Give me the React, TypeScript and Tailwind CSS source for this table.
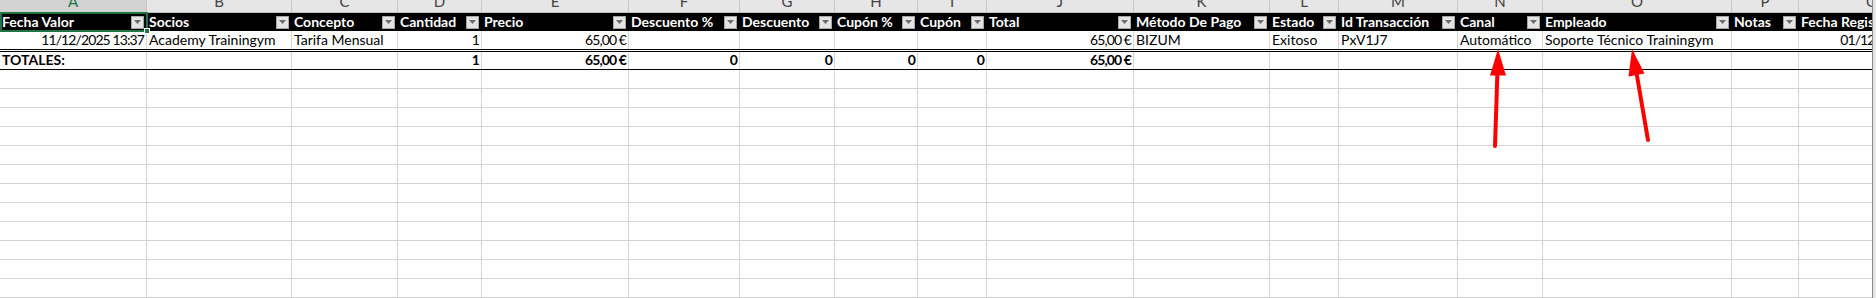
import React from "react";

const GRID =
  "grid grid-cols-[147px_145px_106px_84px_147px_111px_95px_83px_69px_147px_136px_69px_119px_85px_189px_67px_147px] w-[1946px]";

const letters = ["A", "B", "C", "D", "E", "F", "G", "H", "I", "J", "K", "L", "M", "N", "O", "P", "Q"];
const headers = [
  "Fecha Valor",
  "Socios",
  "Concepto",
  "Cantidad",
  "Precio",
  "Descuento %",
  "Descuento",
  "Cupón %",
  "Cupón",
  "Total",
  "Método De Pago",
  "Estado",
  "Id Transacción",
  "Canal",
  "Empleado",
  "Notas",
  "Fecha Registro",
];
const data: [string, boolean][] = [
  ["11/12/2025 13:37", true],
  ["Academy Trainingym", false],
  ["Tarifa Mensual", false],
  ["1", true],
  ["65,00 €", true],
  ["", false],
  ["", false],
  ["", false],
  ["", false],
  ["65,00 €", true],
  ["BIZUM", false],
  ["Exitoso", false],
  ["PxV1J7", false],
  ["Automático", false],
  ["Soporte Técnico Trainingym", false],
  ["", false],
  ["01/12/2025 10:00", true],
];
const totals: [string, boolean][] = [
  ["TOTALES:", false],
  ["", false],
  ["", false],
  ["1", true],
  ["65,00 €", true],
  ["0", true],
  ["0", true],
  ["0", true],
  ["0", true],
  ["65,00 €", true],
  ["", false],
  ["", false],
  ["", false],
  ["", false],
  ["", false],
  ["", false],
  ["", false],
];

function FilterButton() {
  return (
    <div className="flex h-[13px] w-[13px] shrink-0 items-center justify-center border border-[#a6a6a6] bg-[#e4e4e4]">
      <svg width="7" height="4" viewBox="0 0 7 4">
        <polygon points="0,0 7,0 3.5,4" fill="#6b6b6b" />
      </svg>
    </div>
  );
}

export default function App() {
  const empty = Array.from({ length: 12 });
  return (
    <div className="relative flex h-[298px] w-[1876px] overflow-hidden bg-white font-['Lato',sans-serif] text-[14px] text-black">
      <div className="relative w-[1872px] overflow-hidden">
        {/* column letters */}
        <div className={GRID + " h-[13px] border-b border-[#bdbdbd] bg-[#e6e6e6]"}>
          {letters.map((l, i) => (
            <div
              key={l}
              className={
                "h-[12px] overflow-hidden border-r border-[#c8c8c8] " +
                (i === 0 ? "bg-[#d2d2d2] text-[#217346]" : "text-[#444444]")
              }
            >
              <div className="-mt-[9px] flex h-[20px] items-center justify-center text-[15px] leading-none">{l}</div>
            </div>
          ))}
        </div>
        {/* header row */}
        <div className={GRID + " h-[18px] bg-black"}>
          {headers.map((h) => (
            <div key={h} className="flex h-[18px] items-center justify-between overflow-hidden pl-[2px] pr-[3px]">
              <span className="whitespace-nowrap font-bold leading-none text-white">{h}</span>
              <FilterButton />
            </div>
          ))}
        </div>
        {/* data row */}
        <div className={GRID + " h-[21px] border-b-[3px] border-double border-black"}>
          {data.map(([t, r], i) => (
            <div
              key={i}
              className={
                "flex h-[18px] items-end overflow-visible whitespace-nowrap border-r border-[#d4d4d4] px-[2px] pb-[2px] leading-none " +
                (r ? "justify-end tracking-[-0.9px]" : "justify-start")
              }
            >
              {t}
            </div>
          ))}
        </div>
        {/* totals row */}
        <div className={GRID + " h-[18px] border-b border-black"}>
          {totals.map(([t, r], i) => (
            <div
              key={i}
              className={
                "flex h-[17px] items-end whitespace-nowrap border-r border-[#d4d4d4] px-[2px] pb-[2px] font-bold leading-none " +
                (r ? "justify-end tracking-[-0.9px]" : "justify-start")
              }
            >
              {t}
            </div>
          ))}
        </div>
        {/* empty rows */}
        {empty.map((_, r) => (
          <div key={r} className={GRID + " h-[19px] border-b border-[#d4d4d4]"}>
            {letters.map((l) => (
              <div key={l} className="h-[18px] border-r border-[#d4d4d4]" />
            ))}
          </div>
        ))}
        {/* selection outline on A1 */}
        <div className="absolute left-0 top-[12px] h-[20px] w-[148px] border-2 border-[#217346]" />
        <div className="absolute left-[144px] top-[28px] h-[6px] w-[6px] border border-white bg-[#217346]" />
      </div>
      <div className="w-px bg-[#8a8a8a]" />
      <div className="w-[3px] bg-[#e6e6e6]" />
      <svg className="pointer-events-none absolute left-0 top-0" width="1876" height="298" viewBox="0 0 1876 298">
        <line x1="1495" y1="146" x2="1497.5" y2="70" stroke="#ff0000" strokeWidth="4" strokeLinecap="round" />
        <polygon points="1498,49 1490,75.5 1506,75.5" fill="#ff0000" />
        <line x1="1648" y1="140" x2="1636" y2="70" stroke="#ff0000" strokeWidth="4" strokeLinecap="round" />
        <polygon points="1632,49 1628.5,76.5 1644.5,73.5" fill="#ff0000" />
      </svg>
    </div>
  );
}
